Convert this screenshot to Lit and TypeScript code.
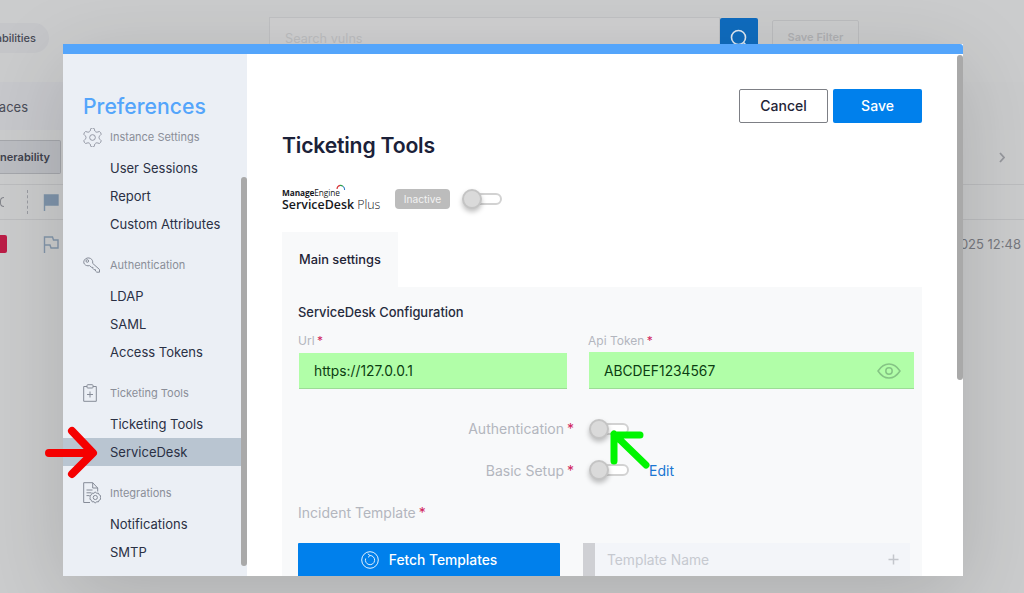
import { LitElement, html, css, svg } from 'lit'
import { customElement } from 'lit/decorators.js'

const GEAR =
	'M12.22 2h-.44a2 2 0 0 0-2 2v.18a2 2 0 0 1-1 1.73l-.43.25a2 2 0 0 1-2 0l-.15-.08a2 2 0 0 0-2.73.73l-.22.38a2 2 0 0 0 .73 2.73l.15.1a2 2 0 0 1 1 1.72v.51a2 2 0 0 1-1 1.74l-.15.09a2 2 0 0 0-.73 2.73l.22.38a2 2 0 0 0 2.73.73l.15-.08a2 2 0 0 1 2 0l.43.25a2 2 0 0 1 1 1.73V20a2 2 0 0 0 2 2h.44a2 2 0 0 0 2-2v-.18a2 2 0 0 1 1-1.73l.43-.25a2 2 0 0 1 2 0l.15.08a2 2 0 0 0 2.73-.73l.22-.39a2 2 0 0 0-.73-2.73l-.15-.08a2 2 0 0 1-1-1.74v-.5a2 2 0 0 1 1-1.74l.15-.09a2 2 0 0 0 .73-2.73l-.22-.38a2 2 0 0 0-2.73-.73l-.15.08a2 2 0 0 1-2 0l-.43-.25a2 2 0 0 1-1-1.73V4a2 2 0 0 0-2-2z'

const ICONS = {
	gear: svg`<svg class="section-icon i-gear" viewBox="2 2 20 20"><path d=${GEAR} /><circle cx="12" cy="12" r="3" /></svg>`,
	key: svg`<svg class="section-icon i-key" viewBox="0 0 18 16">
		<path d="M1.300 3.200C2.500 1 5.500 0.300 7.600 1.500c1.700 1 2.500 2.900 2 4.800l6.900 6.200v2.700h-2.700l-1.300-1.200v-1.300h-1.500l-1-1v-1.300H8.700L6.500 8.600C4.600 9.200 2.500 8.500 1.400 7 0.500 5.800 0.600 4.400 1.300 3.200z" />
		<circle cx="4.300" cy="4" r="1.300" />
	</svg>`,
	clip: svg`<svg class="section-icon i-clip" viewBox="0 0 14 18">
		<path d="M4 2.500H0.700v14.800h12.600V2.500H10" />
		<rect x="4" y="0.700" width="6" height="3.300" rx="0.800" />
		<path d="M7 7.500v6M4 10.500h6" />
	</svg>`,
	doc: svg`<svg class="section-icon i-doc" viewBox="0 0 18 22">
		<path d="M7 20.500H0.700V0.700h9l5 5.300v3.500" />
		<path d="M9.700 0.700V6h5" />
		<path d="M3.500 8h6M3.500 10.800h5M3.500 13.600h3" />
		<path d="M12.300 9.800l1.200 1.500 1.900-.2.700 1.700 1.600.9-.3 1.800.3 1.800-1.600.9-.7 1.700-1.900-.2-1.200 1.500-1.200-1.500-1.900.2-.7-1.700-1.600-.9.3-1.800-.3-1.800 1.600-.9.700-1.700 1.900.2z" />
		<circle cx="12.300" cy="15.500" r="2.100" />
	</svg>`,
}

const SECTIONS = [
	{ icon: 'gear', title: 'Instance Settings', items: ['User Sessions', 'Report', 'Custom Attributes'] },
	{ icon: 'key', title: 'Authentication', items: ['LDAP', 'SAML', 'Access Tokens'] },
	{ icon: 'clip', title: 'Ticketing Tools', items: ['Ticketing Tools', 'ServiceDesk'] },
	{ icon: 'doc', title: 'Integrations', items: ['Notifications', 'SMTP'] },
] as const

@customElement('app-root')
export class AppRoot extends LitElement {
	static styles = css`
		:host {
			display: block;
			position: relative;
			width: 1024px;
			height: 593px;
			overflow: hidden;
			font-family: Inter, 'Liberation Sans', sans-serif;
			background: #cbcccd;
		}
		svg {
			display: block;
		}

		/* dimmed page behind the dialog */
		.page {
			display: flex;
			flex-direction: column;
			height: 593px;
			color: #6d6f76;
			font-size: 12px;
		}
		.top {
			display: flex;
			align-items: flex-start;
			height: 82px;
			flex: none;
		}
		.pill {
			width: 111px;
			height: 30px;
			margin: 23px 0 0 -62px;
			padding-right: 13px;
			box-sizing: border-box;
			display: flex;
			align-items: center;
			justify-content: flex-end;
			border-radius: 15px;
			background: #c5c6c9;
			color: #474a55;
			font-size: 11px;
			font-weight: 500;
		}
		.search {
			width: 451px;
			height: 40px;
			margin: 17px 0 0 220px;
			padding: 13px 0 0 15px;
			box-sizing: border-box;
			border: 1px solid #c0c1c3;
			background: #d0d0d1;
			color: #bdbec0;
			font-size: 12.7px;
		}
		.search-btn {
			width: 38px;
			height: 40px;
			margin-top: 18px;
			display: flex;
			justify-content: center;
			padding-top: 10px;
			box-sizing: border-box;
			background: #0f6cbf;
			border-radius: 2px 2px 0 0;
		}
		.save-filter {
			width: 87px;
			height: 34px;
			margin: 20px 0 0 14px;
			box-sizing: border-box;
			border: 1px solid #bcbdbf;
			border-radius: 2px;
			text-align: center;
			line-height: 33px;
			font-size: 11px;
			font-weight: 600;
			color: #b0b1b4;
		}
		.tabs {
			display: flex;
			height: 48px;
			flex: none;
			align-items: center;
			background: #cacbcc;
		}
		.tab-active {
			width: 63px;
			height: 48px;
			box-sizing: border-box;
			display: flex;
			align-items: center;
			justify-content: flex-end;
			padding: 1px 35px 0 0;
			background: #c7c8cc;
			color: #4a4d58;
			font-size: 13px;
		}
		.filters {
			display: flex;
			justify-content: space-between;
			align-items: center;
			height: 55px;
			flex: none;
			border-bottom: 1px solid #bcbdbf;
			box-sizing: border-box;
		}
		.vuln-btn {
			width: 61px;
			height: 34px;
			box-sizing: border-box;
			display: flex;
			align-items: center;
			justify-content: flex-end;
			padding-right: 10px;
			background: #bbbdc2;
			border: 1px solid #a5a7ac;
			border-left: 0;
			border-radius: 0 2px 2px 0;
			color: #3f424d;
			font-size: 11px;
			font-weight: 600;
		}
		.chevron {
			margin-right: 19px;
		}
		.head-row {
			display: flex;
			align-items: center;
			height: 35px;
			flex: none;
			box-sizing: border-box;
			border-bottom: 1px solid #bcbdbf;
		}
		.sort {
			width: 4px;
			height: 10px;
			box-sizing: border-box;
			border: 1.5px solid #85878d;
			border-left: 0;
			border-radius: 0 5px 5px 0;
			transform: scaleX(-1);
		}
		.dash {
			height: 24px;
			margin-left: 23px;
			border-left: 1px dashed #9a9ca2;
		}
		.flag {
			margin-left: 15px;
		}
		.row {
			display: flex;
			align-items: center;
			height: 48px;
			flex: none;
		}
		.sev {
			width: 7px;
			height: 18px;
			background: #bc1e47;
			border-radius: 0 2px 2px 0;
		}
		.row .flag {
			margin-left: 36px;
		}
		.date {
			margin-left: auto;
			margin-right: 3px;
			font-size: 13px;
			color: #77797f;
		}

		/* dialog */
		.dialog {
			position: absolute;
			left: 63px;
			top: 44px;
			width: 900px;
			height: 532px;
			display: flex;
			flex-direction: column;
			overflow: hidden;
			background: #fff;
			box-shadow: 0 20px 80px rgba(0, 0, 0, 0.15);
		}
		.stripe {
			height: 10px;
			flex: none;
			background: #54a5fb;
			border-radius: 0 3px 0 0;
		}
		.body {
			display: flex;
			flex: 1;
			min-height: 0;
			position: relative;
		}

		.side {
			position: relative;
			width: 184px;
			flex: none;
			padding-top: 38px;
			box-sizing: border-box;
			background: #ebeff5;
			overflow: hidden;
		}
		.side-title {
			height: 28px;
			line-height: 29px;
			margin: 0 0 7px 20px;
			font-size: 21.2px;
			font-weight: 500;
			color: #54a5fb;
		}
		.section {
			margin-bottom: 17px;
		}
		.section-head {
			display: flex;
			align-items: center;
			height: 20px;
			margin-bottom: 7px;
			padding-left: 20px;
			font-size: 11px;
			color: #8a8e98;
		}
		.section-icon {
			fill: none;
			stroke: #868c98;
			stroke-width: 1;
			flex: none;
		}
		.i-gear {
			width: 19px;
			height: 19px;
			margin-right: 8px;
			stroke: #8f94a0;
		}
		.i-key {
			width: 18px;
			height: 16px;
			margin-right: 9px;
		}
		.i-clip {
			width: 14px;
			height: 18px;
			margin-right: 13px;
		}
		.i-doc {
			width: 18px;
			height: 22px;
			margin-right: 9px;
		}
		.item {
			height: 28px;
			line-height: 28px;
			margin-right: 6px;
			padding-left: 47px;
			font-size: 13px;
			color: #2a3044;
		}
		.item.on {
			background: #b9c5d1;
		}
		.bar {
			position: absolute;
			width: 6px;
			border-radius: 3px;
			background: #a9a9a9;
		}
		.bar-side {
			right: 0;
			top: 123px;
			height: 389px;
		}
		.bar-main {
			right: 0;
			top: 1px;
			height: 325px;
		}

		.main {
			flex: 1;
			min-width: 0;
			padding: 35px 41px 0 35px;
			overflow: hidden;
		}
		.actions {
			display: flex;
			justify-content: flex-end;
			gap: 5px;
		}
		.btn {
			width: 89px;
			height: 34px;
			box-sizing: border-box;
			border-radius: 2px;
			padding-bottom: 2px;
			display: flex;
			align-items: center;
			justify-content: center;
			font-size: 14px;
			font-weight: 500;
		}
		.btn.ghost {
			border: 1px solid #7d7f85;
			color: #1f2436;
		}
		.btn.primary {
			background: #0080ec;
			color: #fff;
		}
		h1 {
			margin: 8px 0 28px;
			height: 28px;
			line-height: 28px;
			font-size: 21.2px;
			font-weight: 600;
			letter-spacing: -0.2px;
			color: #1b2139;
		}
		.product {
			display: flex;
			align-items: center;
			height: 23px;
		}
		.logo {
			width: 113px;
			flex: none;
			position: relative;
			padding-top: 2px;
			color: #17181c;
			font-family: 'Open Sans', sans-serif;
		}
		.logo-top {
			font-size: 8.3px;
			line-height: 10px;
			letter-spacing: -0.1px;
		}
		.logo-top b {
			font-weight: 700;
		}
		.logo-bottom {
			font-size: 12.4px;
			line-height: 13px;
			font-weight: 600;
			white-space: nowrap;
		}
		.logo-bottom span {
			font-weight: 300;
		}
		.logo-arc {
			position: absolute;
			left: 54px;
			top: -2px;
		}
		.badge {
			width: 55px;
			height: 20px;
			line-height: 20px;
			text-align: center;
			border-radius: 4px;
			background: #bcbcbc;
			color: #f2f2f2;
			font-size: 10.2px;
			font-weight: 400;
			margin-right: 12px;
		}
		.toggle {
			position: relative;
			width: 40px;
			height: 20px;
			flex: none;
		}
		.toggle::before {
			content: '';
			position: absolute;
			left: 8px;
			right: 0;
			top: 4px;
			height: 12px;
			box-sizing: border-box;
			border: 2px solid #d2d2d2;
			border-radius: 6px;
			background: #fff;
		}
		.toggle::after {
			content: '';
			position: absolute;
			left: 0;
			top: 0;
			width: 20px;
			height: 20px;
			box-sizing: border-box;
			border: 2px solid #c4c4c4;
			border-radius: 50%;
			background: #dadada;
			box-shadow: 0 3px 5px rgba(0, 0, 0, 0.25);
		}
		.tab {
			width: 116px;
			height: 55px;
			margin-top: 22px;
			box-sizing: border-box;
			padding-left: 17px;
			line-height: 55px;
			background: #f8f9fa;
			font-size: 12.8px;
			font-weight: 500;
			color: #1f2436;
		}
		.panel {
			height: 320px;
			box-sizing: border-box;
			padding: 17px 8px 0 16px;
			background: #f8f9fa;
		}
		h2 {
			margin: 0 0 12px;
			height: 16px;
			line-height: 18px;
			font-size: 12.9px;
			font-weight: 500;
			color: #262b3d;
		}
		.fields {
			display: grid;
			grid-template-columns: 270px 326px;
			gap: 20px;
		}
		.label {
			height: 16px;
			line-height: 17px;
			margin-bottom: 4px;
			font-size: 12px;
			color: #b3b6be;
		}
		.star {
			color: #d0245c;
		}
		.label .star {
			margin-left: -1px;
		}
		.switch-label .star,
		.incident .star {
			margin-left: -1px;
		}
		.input {
			display: flex;
			align-items: center;
			justify-content: space-between;
			height: 37px;
			margin-left: 1px;
			padding: 2px 13px 0 15px;
			box-sizing: border-box;
			background: #b1fea8;
			border-bottom: 1px solid #9cdc96;
			font-size: 13.8px;
			color: #0c3d12;
		}
		.input.url {
			margin-right: 1px;
			border-top: 1px solid #f8f9fa;
			padding-top: 1px;
		}
		.switch-row {
			display: grid;
			grid-template-columns: 276px 40px auto;
			align-items: center;
			height: 22px;
			column-gap: 15px;
			font-size: 14px;
			color: #b3b6be;
		}
		.switch-row.first {
			margin-top: 29px;
			margin-bottom: 19px;
		}
		.switch-row.first .switch-label {
			padding-bottom: 1px;
		}
		.switch-label {
			text-align: right;
		}
		.edit {
			margin-left: 5px;
			color: #1a76d2;
		}
		.incident {
			height: 16px;
			line-height: 16px;
			margin: 24px 0 22px;
			font-size: 14px;
			color: #b3b6be;
		}
		.templates {
			display: flex;
			gap: 23px;
		}
		.fetch {
			width: 262px;
			height: 34px;
			padding-bottom: 1px;
			box-sizing: border-box;
			display: flex;
			align-items: center;
			justify-content: center;
			gap: 10px;
			background: #0080ec;
			color: #fff;
			font-size: 13.8px;
			font-weight: 500;
			border-radius: 1px;
		}
		.tpl {
			display: flex;
			align-items: center;
			width: 327px;
			height: 34px;
			box-sizing: border-box;
			border-left: 12px solid #cfd0d4;
			background: #f3f5f9;
			padding: 0 11px 1px 12px;
			justify-content: space-between;
			font-size: 13.8px;
			color: #c6c9d0;
		}

		.arrows {
			position: absolute;
			left: 0;
			top: 0;
			pointer-events: none;
		}
	`

	private section(s: (typeof SECTIONS)[number]) {
		return html`
			<div class="section">
				<div class="section-head">${ICONS[s.icon]}${s.title}</div>
				${s.items.map((i) => html`<div class="item ${i === 'ServiceDesk' ? 'on' : ''}">${i}</div>`)}
			</div>
		`
	}

	private background() {
		return html`
			<div class="page">
				<div class="top">
					<div class="pill">Vulnerabilities</div>
					<div class="search">Search vulns</div>
					<div class="search-btn">
						<svg width="20" height="20" viewBox="0 0 20 20" fill="none" stroke="#dfe9f3" stroke-width="1.6">
							<circle cx="9.5" cy="9.5" r="7" /><path d="M14.5 14.5l4 4" />
						</svg>
					</div>
					<div class="save-filter">Save Filter</div>
				</div>
				<div class="tabs"><div class="tab-active">Interfaces</div></div>
				<div class="filters">
					<div class="vuln-btn">Vulnerability</div>
					<svg class="chevron" width="6" height="11" viewBox="0 0 6 11" fill="none" stroke="#96989d" stroke-width="1.8">
						<path d="M1 1l4 4.500-4 4.500" />
					</svg>
				</div>
				<div class="head-row">
					<div class="sort"></div>
					<div class="dash"></div>
					<svg class="flag" width="16" height="18" viewBox="0 0 16 18" fill="#7f94ab" stroke="#7f94ab" stroke-width="1.4">
						<path d="M1.500 18V2h13.500v10H1.500" />
					</svg>
				</div>
				<div class="row">
					<div class="sev"></div>
					<svg class="flag" width="16" height="18" viewBox="0 0 16 18" fill="none" stroke="#8496aa" stroke-width="1.4">
						<path d="M1.500 18V2h8l1 3h4.500v8H8l-1-3H1.500" />
					</svg>
					<div class="date">2025 12:48</div>
				</div>
			</div>
		`
	}

	private toggle() {
		return html`<div class="toggle"></div>`
	}

	render() {
		return html`
			${this.background()}
			<div class="dialog">
				<div class="stripe"></div>
				<div class="body">
					<div class="side">
						<div class="side-title">Preferences</div>
						${SECTIONS.map((s) => this.section(s))}
						<div class="bar bar-side"></div>
					</div>
					<div class="main">
						<div class="actions">
							<div class="btn ghost">Cancel</div>
							<div class="btn primary">Save</div>
						</div>
						<h1>Ticketing Tools</h1>
						<div class="product">
							<div class="logo">
								<div class="logo-top"><b>Manage</b>Engine</div>
								<div class="logo-bottom">ServiceDesk <span>Plus</span></div>
								<svg class="logo-arc" width="10" height="9" viewBox="0 0 10 9" fill="none" stroke-width="1.100">
									<path d="M1 5a4 4 0 0 1 3-3.600" stroke="#d8383a" />
									<path d="M4 1.400a4 4 0 0 1 3 1" stroke="#2f9e4f" />
									<path d="M7 2.400a4 4 0 0 1 1.600 3.600" stroke="#2f7fc4" />
								</svg>
							</div>
							<div class="badge">Inactive</div>
							${this.toggle()}
						</div>
						<div class="tab">Main settings</div>
						<div class="panel">
							<h2>ServiceDesk Configuration</h2>
							<div class="fields">
								<div>
									<div class="label">Url <span class="star">*</span></div>
									<div class="input url">https://127.0.0.1</div>
								</div>
								<div>
									<div class="label">Api Token <span class="star">*</span></div>
									<div class="input">
										ABCDEF1234567
										<svg width="24" height="16" viewBox="0 0 24 16" fill="none" stroke="#85c485" stroke-width="1.500">
											<path d="M1 8c3-4.500 7-7 11-7s8 2.500 11 7c-3 4.500-7 7-11 7S4 12.500 1 8z" />
											<circle cx="12" cy="8" r="3.200" />
										</svg>
									</div>
								</div>
							</div>
							<div class="switch-row first">
								<div class="switch-label">Authentication <span class="star">*</span></div>
								${this.toggle()}
							</div>
							<div class="switch-row">
								<div class="switch-label">Basic Setup <span class="star">*</span></div>
								${this.toggle()}
								<div class="edit">Edit</div>
							</div>
							<div class="incident">Incident Template <span class="star">*</span></div>
							<div class="templates">
								<div class="fetch">
									<svg width="18" height="18" viewBox="0 0 18 18" fill="none" stroke="#e3f0fc" stroke-width="1">
										<circle cx="9" cy="9" r="8.300" />
										<path d="M9 4.500a4.600 4.600 0 1 1-4.300 3" />
										<path d="M6.800 2.800L9 4.500 7 6.400" />
									</svg>
									Fetch Templates
								</div>
								<div class="tpl">
									Template Name
									<svg width="11" height="11" viewBox="0 0 11 11" stroke="#c3c6cc" stroke-width="1.500">
										<path d="M5.500 0.500v10M0.500 5.500h10" />
									</svg>
								</div>
							</div>
						</div>
					</div>
					<div class="bar bar-main"></div>
				</div>
			</div>
			<svg class="arrows" width="1024" height="593" viewBox="0 0 1024 593" fill="none" stroke-linecap="round" stroke-linejoin="round">
				<path d="M49 453H91M72 431l21 22-21 21" stroke="#f50000" stroke-width="8" />
				<path d="M646 465L614 434M614 461V435H640" stroke="#00f500" stroke-width="7" />
			</svg>
		`
	}
}
